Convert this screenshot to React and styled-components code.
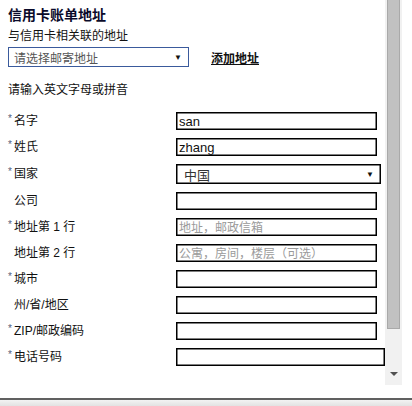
import React from 'react';
import styled, { createGlobalStyle } from 'styled-components';

const GlobalStyle = createGlobalStyle`
    html, body {
        margin: 0;
        padding: 0;
        background: #fff;
    }
    body {
        font-family: "Liberation Sans", "Noto Sans CJK SC", sans-serif;
        color: #111;
    }
`;

const fields = [
    { label: '名字', required: true, value: 'san' },
    { label: '姓氏', required: true, value: 'zhang' },
    { label: '国家', required: true, select: '中国' },
    { label: '公司' },
    { label: '地址第 1 行', required: true, placeholder: '地址，邮政信箱' },
    { label: '地址第 2 行', placeholder: '公寓，房间，楼层（可选）' },
    { label: '城市', required: true },
    { label: '州/省/地区' },
    { label: 'ZIP/邮政编码', required: true },
    { label: '电话号码', required: true, wide: true },
];

const Frame = styled.div`
    width: 412px;
    height: 406px;
    display: flex;
    flex-direction: column;
    overflow: hidden;
`;

const Viewport = styled.div`
    height: 385px;
    width: 402px;
    display: flex;
`;

const Content = styled.div`
    width: 385px;
    padding: 6px 0 0 8px;
    box-sizing: border-box;
    overflow: hidden;
`;

const Title = styled.h2`
    margin: 0;
    font-size: 14px;
    line-height: 18px;
    font-weight: 700;
    color: #0a0a2a;
`;

const Sub = styled.div`
    font-size: 12px;
    line-height: 17px;
    margin-top: 4px;
`;

const TopRow = styled.div`
    display: flex;
    align-items: center;
    gap: 22px;
    margin-top: 2px;
`;

const AddressPicker = styled.div`
    width: 181px;
    height: 20px;
    box-sizing: border-box;
    border: 1px solid #3a5a9c;
    display: flex;
    align-items: center;
    justify-content: space-between;
    padding: 0 6px 0 5px;
    font-size: 12px;
    color: #555;
`;

const Arrow = styled.span`
    font-size: 8px;
    color: #111;
`;

const AddLink = styled.a`
    font-size: 12px;
    font-weight: 700;
    color: #111;
    text-decoration: underline;
`;

const Hint = styled.div`
    font-size: 12px;
    line-height: 16px;
    margin-top: 15px;
`;

const Fields = styled.div`
    display: grid;
    grid-template-columns: 168px auto;
    row-gap: 8px;
    align-items: center;
    margin-top: 14px;
`;

const Label = styled.div`
    display: flex;
    align-items: center;
    font-size: 12px;
    line-height: 16px;
`;

const Star = styled.span`
    width: 6px;
    font-size: 10px;
    color: #55607a;
    align-self: flex-start;
    line-height: 12px;
`;

const TextBox = styled.input`
    width: ${(p) => (p.$wide ? '209px' : '201px')};
    height: 18px;
    box-sizing: border-box;
    margin: 0;
    border: 1px solid #000;
    box-shadow: inset 0 0 0 0.5px #000;
    padding: 0 2px;
    font-family: "Liberation Sans", "Noto Sans CJK SC", sans-serif;
    font-size: 13px;
    color: #111;
    outline: none;
    &::placeholder {
        color: #9a9a9a;
        font-size: 12px;
    }
`;

const CountryBox = styled.div`
    width: 205px;
    height: 20px;
    box-sizing: border-box;
    border: 1px solid #000;
    box-shadow: inset 0 0 0 0.5px #000;
    display: flex;
    align-items: center;
    justify-content: space-between;
    padding: 0 6px 0 7px;
    font-size: 13px;
    color: #333;
`;

const Scrollbar = styled.div`
    width: 17px;
    background: #f1f1f1;
    display: flex;
    flex-direction: column;
    align-items: center;
`;

const Thumb = styled.div`
    width: 13px;
    height: 329px;
    box-sizing: border-box;
    background: #c1c1c1;
    border: 1px solid #a9a9a9;
    border-top: none;
`;

const DownArrow = styled.div`
    margin-top: 43px;
    width: 0;
    height: 0;
    border-left: 4px solid transparent;
    border-right: 4px solid transparent;
    border-top: 4px solid #505050;
`;

const BottomBar = styled.div`
    margin-top: 13px;
    flex: 1;
    border-top: 2px solid #606060;
    background: linear-gradient(#f3f3f3, #e2e2e2);
`;

const App = () => (
    <>
        <GlobalStyle />
        <Frame>
            <Viewport>
                <Content>
                    <Title>信用卡账单地址</Title>
                    <Sub>与信用卡相关联的地址</Sub>
                    <TopRow>
                        <AddressPicker>
                            请选择邮寄地址
                            <Arrow>▼</Arrow>
                        </AddressPicker>
                        <AddLink>添加地址</AddLink>
                    </TopRow>
                    <Hint>请输入英文字母或拼音</Hint>
                    <Fields>
                        {fields.map((f) => (
                            <React.Fragment key={f.label}>
                                <Label>
                                    <Star>{f.required ? '*' : ''}</Star>
                                    {f.label}
                                </Label>
                                {f.select ? (
                                    <CountryBox>
                                        {f.select}
                                        <Arrow>▼</Arrow>
                                    </CountryBox>
                                ) : (
                                    <TextBox
                                        $wide={f.wide}
                                        defaultValue={f.value}
                                        placeholder={f.placeholder}
                                    />
                                )}
                            </React.Fragment>
                        ))}
                    </Fields>
                </Content>
                <Scrollbar>
                    <Thumb />
                    <DownArrow />
                </Scrollbar>
            </Viewport>
            <BottomBar />
        </Frame>
    </>
);

export default App;
